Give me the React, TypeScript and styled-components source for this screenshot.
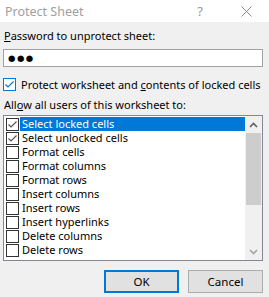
import React from "react";
import styled, { createGlobalStyle } from "styled-components";

const Global = createGlobalStyle`
  html, body { margin: 0; padding: 0; background: #f0f0f0; }
  body { font-family: "Segoe UI", "Noto Sans", sans-serif; font-size: 11px; color: #000; }
  * { box-sizing: border-box; }
`;

const Window = styled.div`
  width: 269px;
  height: 297px;
  background: #f0f0f0;
  display: flex;
  flex-direction: column;
  overflow: hidden;
`;

const TitleBar = styled.div`
  height: 22px;
  background: #fff;
  display: flex;
  align-items: center;
  padding-left: 5px;
  color: #a0a0a0;
  font-size: 12.5px;
`;

const TitleText = styled.span`
  flex: 1;
`;

const TitleButton = styled.span`
  width: 46px;
  height: 22px;
  display: flex;
  align-items: center;
  justify-content: center;
  color: #9a9a9a;
  font-size: 13px;
`;

const Body = styled.div`
  display: flex;
  flex-direction: column;
  padding: 0 6px 0 3px;
`;

const Label = styled.div<{ $top: number }>`
  margin-top: ${(p) => p.$top}px;
  padding-left: 1px;
  height: 16px;
  line-height: 16px;
  white-space: nowrap;
`;

const Key = styled.span`
  text-decoration: underline;
`;

const PasswordInput = styled.div`
  margin-top: 5px;
  height: 18px;
  border: 1px solid #a2a2a2;
  background: #fff;
  display: flex;
  align-items: center;
  padding-left: 4px;
  font-family: "DejaVu Sans", sans-serif;
  font-size: 8.5px;
  letter-spacing: 1.5px;
`;

const CheckRow = styled.label`
  margin-top: 11px;
  height: 13px;
  display: flex;
  align-items: center;
  gap: 5px;
  white-space: nowrap;
`;

const Box = styled.span<{ $accent?: boolean }>`
  width: 13px;
  height: 13px;
  flex: none;
  border: 1px solid ${(p) => (p.$accent ? "#0078d7" : "#333")};
  background: #fff;
  display: flex;
  align-items: center;
  justify-content: center;
`;

const ListBox = styled.div`
  margin-top: 2px;
  height: 146px;
  border: 1px solid #828790;
  background: #fff;
  display: flex;
`;

const Rows = styled.div`
  flex: 1;
  padding-top: 1px;
  display: flex;
  flex-direction: column;
`;

const Row = styled.div`
  height: 14px;
  display: flex;
  align-items: center;
  padding-left: 2px;
`;

const RowText = styled.span<{ $selected?: boolean }>`
  flex: 1;
  margin-left: 1px;
  height: 14px;
  line-height: 14px;
  padding-left: 2px;
  white-space: nowrap;
  background: ${(p) => (p.$selected ? "#0078d7" : "transparent")};
  color: ${(p) => (p.$selected ? "#fff" : "#000")};
`;

const ScrollBar = styled.div`
  width: 17px;
  flex: none;
  background: #f0f0f0;
  display: flex;
  flex-direction: column;
`;

const Arrow = styled.div`
  height: 17px;
  display: flex;
  align-items: center;
  justify-content: center;
`;

const Track = styled.div`
  flex: 1;
  display: flex;
  flex-direction: column;
`;

const Thumb = styled.div`
  height: 72px;
  margin: 0 1px;
  background: #cdcdcd;
`;

const Buttons = styled.div`
  margin-top: 9px;
  display: flex;
  justify-content: flex-end;
  gap: 9px;
`;

const Button = styled.button<{ $default?: boolean }>`
  width: 75px;
  height: 23px;
  background: #e1e1e1;
  border: ${(p) => (p.$default ? "2px solid #0078d7" : "1px solid #adadad")};
  font-family: "Segoe UI", "Noto Sans", sans-serif;
  font-size: 11.5px;
  color: #000;
  padding: 0;
`;

const Check = ({ color }: { color: string }) => (
  <svg width="11" height="11" viewBox="0 0 11 11">
    <polyline points="1.5,5.5 4,8 9.5,2.5" fill="none" stroke={color} strokeWidth="1.2" />
  </svg>
);

const Chevron = ({ up, color }: { up?: boolean; color: string }) => (
  <svg width="9" height="6" viewBox="0 0 9 6">
    <polyline
      points={up ? "1,5 4.5,1.5 8,5" : "1,1 4.5,4.5 8,1"}
      fill="none"
      stroke={color}
      strokeWidth="1.6"
    />
  </svg>
);

const items: { label: string; checked: boolean }[] = [
  { label: "Select locked cells", checked: true },
  { label: "Select unlocked cells", checked: true },
  { label: "Format cells", checked: false },
  { label: "Format columns", checked: false },
  { label: "Format rows", checked: false },
  { label: "Insert columns", checked: false },
  { label: "Insert rows", checked: false },
  { label: "Insert hyperlinks", checked: false },
  { label: "Delete columns", checked: false },
  { label: "Delete rows", checked: false },
];

export default function App() {
  return (
    <>
      <Global />
      <Window>
        <TitleBar>
          <TitleText>Protect Sheet</TitleText>
          <TitleButton>?</TitleButton>
          <TitleButton>
            <svg width="11" height="11" viewBox="0 0 11 11">
              <path d="M0.5,0.5 L10.5,10.5 M10.5,0.5 L0.5,10.5" stroke="#8a8a8a" strokeWidth="1" />
            </svg>
          </TitleButton>
        </TitleBar>
        <Body>
          <Label $top={6}>
            <Key>P</Key>assword to unprotect sheet:
          </Label>
          <PasswordInput>●●●</PasswordInput>
          <CheckRow>
            <Box $accent>
              <Check color="#0078d7" />
            </Box>
            <span>
              Protect worksheet and <Key>c</Key>ontents of locked cells
            </span>
          </CheckRow>
          <Label $top={6}>
            All<Key>o</Key>w all users of this worksheet to:
          </Label>
          <ListBox>
            <Rows>
              {items.map((it, i) => (
                <Row key={it.label}>
                  <Box>{it.checked && <Check color="#555" />}</Box>
                  <RowText $selected={i === 0}>{it.label}</RowText>
                </Row>
              ))}
            </Rows>
            <ScrollBar>
              <Arrow>
                <Chevron up color="#606060" />
              </Arrow>
              <Track>
                <Thumb />
              </Track>
              <Arrow>
                <Chevron color="#a3a3a3" />
              </Arrow>
            </ScrollBar>
          </ListBox>
          <Buttons>
            <Button $default>OK</Button>
            <Button>Cancel</Button>
          </Buttons>
        </Body>
      </Window>
    </>
  );
}
